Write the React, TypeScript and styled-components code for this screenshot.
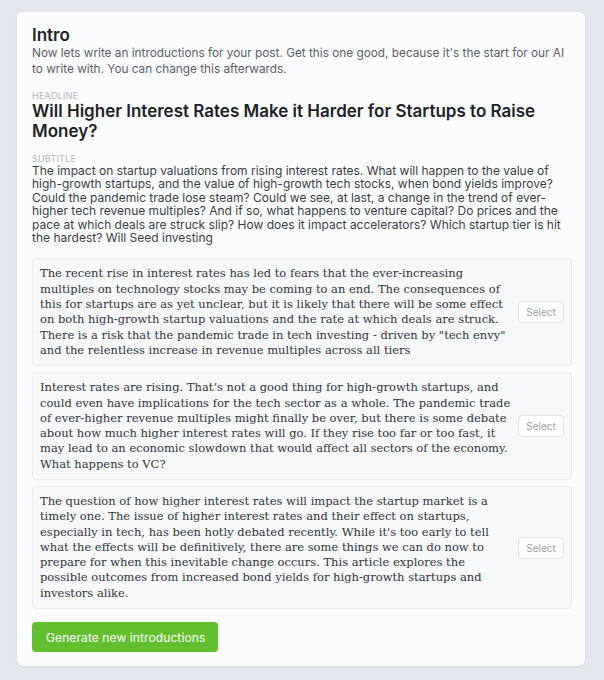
import React from "react";
import styled, { createGlobalStyle } from "styled-components";

const Global = createGlobalStyle`
  html, body { margin: 0; padding: 0; background: #e4e7ed; }
  body { font-family: Inter, "Noto Sans", sans-serif; }
`;

const Page = styled.div`
  padding: 12px 19px 15px 17px;
  min-height: 680px;
  box-sizing: border-box;
`;

const Card = styled.section`
  background: #fbfcfe;
  border-radius: 6px;
  box-shadow: 0 1px 2px rgba(0, 0, 0, 0.08);
  padding: 13px 13px 14px 15px;
  display: flex;
  flex-direction: column;
`;

const Title = styled.h1`
  margin: 0;
  font-size: 17px;
  font-weight: 600;
  color: #1f2328;
  line-height: 20px;
`;

const Description = styled.p`
  margin: 0;
  font-size: 11.8px;
  line-height: 16px;
  color: #5b5f66;
`;

const Label = styled.div<{ $gap: number }>`
  margin-top: ${(p) => p.$gap}px;
  font-size: 9px;
  letter-spacing: 0.2px;
  line-height: 11px;
  color: #b3b7bd;
  text-transform: uppercase;
`;

const Headline = styled.h2`
  margin: 0;
  font-size: 17px;
  font-weight: 600;
  line-height: 20px;
  color: #1f2328;
`;

const Subtitle = styled.p`
  margin: 0;
  font-size: 12px;
  line-height: 13.4px;
  color: #3b3f45;
`;

const Options = styled.div`
  margin-top: 14px;
  display: flex;
  flex-direction: column;
  gap: 6px;
`;

const Option = styled.div`
  display: flex;
  align-items: center;
  gap: 2px;
  padding: 7px 7px 7px 7px;
  background: #f7f8fa;
  border: 1px solid #eaecf0;
  border-radius: 4px;
`;

const OptionText = styled.p`
  flex: 1;
  margin: 0;
  font-family: "DejaVu Serif", "Liberation Serif", serif;
  font-size: 11.5px;
  line-height: 15.3px;
  color: #33363b;
`;

const SelectButton = styled.button`
  flex: none;
  width: 46px;
  height: 22px;
  background: #ffffff;
  border: 1px solid #dfe2e7;
  border-radius: 4px;
  font-family: Inter, sans-serif;
  font-size: 10px;
  color: #9aa0a8;
  padding: 0;
`;

const GenerateButton = styled.button`
  align-self: flex-start;
  margin-top: 13px;
  height: 30px;
  padding: 0 13px 0 14px;
  background: #62bf2d;
  border: none;
  border-radius: 4px;
  color: #ffffff;
  font-family: Inter, sans-serif;
  font-size: 12px;
  letter-spacing: 0.1px;
`;

const options = [
  `The recent rise in interest rates has led to fears that the ever-increasing multiples on technology stocks may be coming to an end. The consequences of this for startups are as yet unclear, but it is likely that there will be some effect on both high-growth startup valuations and the rate at which deals are struck. There is a risk that the pandemic trade in tech investing - driven by "tech envy" and the relentless increase in revenue multiples across all tiers`,
  `Interest rates are rising. That\u2019s not a good thing for high-growth startups, and could even have implications for the tech sector as a whole. The pandemic trade of ever-higher revenue multiples might finally be over, but there is some debate about how much higher interest rates will go. If they rise too far or too fast, it may lead to an economic slowdown that would affect all sectors of the economy. What happens to VC?`,
  `The question of how higher interest rates will impact the startup market is a timely one. The issue of higher interest rates and their effect on startups, especially in tech, has been hotly debated recently. While it's too early to tell what the effects will be definitively, there are some things we can do now to prepare for when this inevitable change occurs. This article explores the possible outcomes from increased bond yields for high-growth startups and investors alike.`,
];

export default function App() {
  return (
    <>
      <Global />
      <Page>
        <Card>
          <Title>Intro</Title>
          <Description>
            Now lets write an introductions for your post. Get this one good, because it's the start for our AI to write with. You can change this afterwards.
          </Description>
          <Label $gap={13}>Headline</Label>
          <Headline>Will Higher Interest Rates Make it Harder for Startups to Raise Money?</Headline>
          <Label $gap={12}>Subtitle</Label>
          <Subtitle>
            The impact on startup valuations from rising interest rates. What will happen to the value of high-growth startups, and the value of high-growth tech stocks, when bond yields improve? Could the pandemic trade lose steam? Could we see, at last, a change in the trend of ever-higher tech revenue multiples? And if so, what happens to venture capital? Do prices and the pace at which deals are struck slip? How does it impact accelerators? Which startup tier is hit the hardest? Will Seed investing
          </Subtitle>
          <Options>
            {options.map((t, i) => (
              <Option key={i}>
                <OptionText>{t}</OptionText>
                <SelectButton>Select</SelectButton>
              </Option>
            ))}
          </Options>
          <GenerateButton>Generate new introductions</GenerateButton>
        </Card>
      </Page>
    </>
  );
}
